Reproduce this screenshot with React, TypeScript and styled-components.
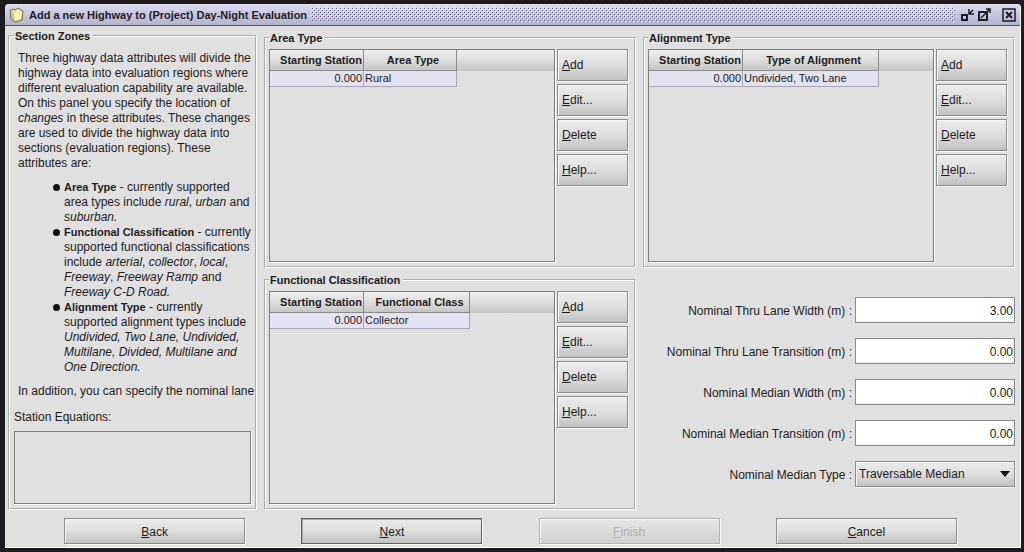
import React from "react";
import styled, { createGlobalStyle } from "styled-components";

const GlobalStyle = createGlobalStyle`
  *, *::before, *::after { box-sizing: border-box; }
  body {
    margin: 0;
    background: #1b1b20;
    color: #1c1c1c;
    font: 12px/15px "Liberation Sans", Arial, sans-serif;
  }
  b { font-size: 11px; }
  button, input, select, textarea { font: inherit; color: inherit; border-radius: 0; }
`;

const Desktop = styled.div`
  display: flex;
  min-height: 100vh;
  padding: 4px 3px 4px 5px;
`;

const Window = styled.main`
  flex: 1;
  display: flex;
  flex-direction: column;
  min-width: 0;
  background: #e0e0e0;
  border-radius: 4px 4px 0 0;
  border-right: 1px solid #fff;
  border-bottom: 1px solid #fff;
  overflow: hidden;
`;

const TitleBar = styled.header`
  display: flex;
  align-items: center;
  gap: 4px;
  height: 22px;
  padding: 0 4px;
  background: linear-gradient(#dedeee, #cacae6 40%, #b4b4cc);
  border-bottom: 1px solid #55555f;
`;

const Title = styled.h1`
  margin: 0;
  padding-top: 1px;
  font-size: 11px;
  line-height: 15px;
  white-space: nowrap;
`;

const Bumps = styled.svg`
  flex: 1;
  min-width: 0;
  height: 15px;
`;

const WindowButtons = styled.div`
  display: flex;
  align-items: center;
  gap: 4px;
  padding-left: 2px;
`;

const IconButton = styled.button<{ $apart?: boolean }>`
  display: flex;
  padding: 0;
  border: 0;
  background: none;
  margin-left: ${(p) => (p.$apart ? "7px" : "0")};
`;

const Panels = styled.div`
  flex: 1;
  display: grid;
  grid-template-columns: 249px minmax(0, 1fr) minmax(0, 1fr);
  gap: 7px;
  padding: 3px 5px 0 3px;
`;

const Column = styled.div`
  display: grid;
  grid-template-rows: 1fr 1fr;
  gap: 5px;
  padding-top: 2px;
`;

const Group = styled.fieldset<{ $column?: boolean }>`
  display: flex;
  flex-direction: ${(p) => (p.$column ? "column" : "row")};
  gap: ${(p) => (p.$column ? "0" : "2px")};
  min-width: 0;
  margin: 0;
  padding: ${(p) => (p.$column ? "8px 4px 4px" : "4px 6px 4px 3px")};
  border: 2px groove #fff;
`;

const Legend = styled.legend`
  padding: 0 3px 0 1px;
  font-size: 11px;
  font-weight: bold;
  line-height: 14px;
`;

const Notes = styled.div`
  flex: 1;
  padding: 0 4px;
  white-space: nowrap;
  p { margin: 0; }
  ul { margin: 9px 0; padding: 0; list-style: none; }
`;

const Note = styled.li`
  display: flex;
  gap: 4px;
  padding-left: 35px;
  &::before {
    content: "";
    flex: none;
    width: 7px;
    height: 7px;
    margin-top: 4px;
    border-radius: 50%;
    background: #111;
  }
`;

const Lines = styled.div`
  white-space: nowrap;
`;

const EquationsLabel = styled.label`
  margin-bottom: 6px;
`;

const Equations = styled.textarea`
  height: 73px;
  resize: none;
  background: #e0e0e0;
  border: 1px solid #7c7c7c;
  box-shadow: 1px 1px 0 #fff;
  outline: none;
`;

const TableBox = styled.div`
  flex: 1;
  min-width: 0;
  border: 1px solid #7c7c7c;
  box-shadow: 1px 1px 0 #fff;
  background: linear-gradient(#efefef, #dcdcdc 50%, #c4c4c4) 0 0 / 100% 21px no-repeat;
`;

const Table = styled.table<{ $second: number }>`
  width: ${(p) => 94 + p.$second}px;
  table-layout: fixed;
  border-collapse: separate;
  border-spacing: 0;
  th {
    height: 21px;
    padding: 0 0 0 6px;
    font-size: 11px;
    border-right: 1px solid #8a8a8a;
    border-bottom: 1px solid #8a8a8a;
    white-space: nowrap;
  }
  th:first-child { width: 94px; padding: 0 1px 0 0; text-align: right; }
  td {
    height: 16px;
    padding: 0 1px;
    font-size: 11px;
    line-height: 15px;
    background: #e2e2f0;
    border-right: 1px solid #a8a8b4;
    border-bottom: 1px solid #a8a8b4;
    white-space: nowrap;
  }
  td:first-child { text-align: right; }
`;

const Actions = styled.div`
  display: flex;
  flex-direction: column;
  gap: 3px;
  width: 71px;
`;

const Button = styled.button<{ $side?: boolean; $focus?: boolean }>`
  width: ${(p) => (p.$side ? "71px" : "181px")};
  height: ${(p) => (p.$side ? "32px" : "26px")};
  padding: ${(p) => (p.$side ? "0 4px" : "2px 4px 0")};
  text-align: ${(p) => (p.$side ? "left" : "center")};
  border: 1px solid ${(p) => (p.$focus ? "#606060" : "#8c8c8c")};
  background: linear-gradient(#ececec, #dedede 50%, #c2c2c2);
  box-shadow: 1px 1px 0 #f8f8f8, inset 1px 1px 0 ${(p) => (p.$focus ? "#aaa" : "#f6f6f6")};
  &:disabled { color: #b0b0b0; border-color: #b4b4b4; background: linear-gradient(#e6e6e6, #d0d0d0); }
`;

const Form = styled.form`
  display: grid;
  grid-template-columns: 1fr 160px;
  grid-auto-rows: 26px;
  align-content: start;
  align-items: center;
  gap: 15px 3px;
  padding-top: 24px;
`;

const FieldLabel = styled.label`
  padding-top: 2px;
  text-align: right;
`;

const Field = styled.input`
  width: 100%;
  height: 26px;
  padding: 2px 1px 0;
  text-align: right;
  background: #fff;
  border: 1px solid #8a8a8a;
  box-shadow: inset -1px -1px 0 #eee;
`;

const SelectWrap = styled.div`
  position: relative;
  svg { position: absolute; right: 5px; top: 10px; pointer-events: none; }
`;

const Select = styled.select`
  display: block;
  width: 100%;
  height: 26px;
  padding: 0 3px;
  appearance: none;
  border: 1px solid #8a8a8a;
  background: linear-gradient(#ececec, #dedede 50%, #c2c2c2);
  box-shadow: 1px 1px 0 #f8f8f8, inset 1px 1px 0 #f6f6f6;
`;

const Footer = styled.footer`
  display: grid;
  grid-template-columns: repeat(4, 1fr);
  justify-items: center;
  padding: 8px 35px 3px 31px;
`;

function Mnemonic({ text }: { text: string }) {
  return (
    <>
      <u>{text[0]}</u>
      {text.slice(1)}
    </>
  );
}

function ZoneGroup({ name, heading, value, second }: { name: string; heading: string; value: string; second: number }) {
  return (
    <Group>
      <Legend>{name}</Legend>
      <TableBox>
        <Table $second={second}>
          <thead>
            <tr>
              <th>Starting Station</th>
              <th>{heading}</th>
            </tr>
          </thead>
          <tbody>
            <tr>
              <td>0.000</td>
              <td>{value}</td>
            </tr>
          </tbody>
        </Table>
      </TableBox>
      <Actions>
        {["Add", "Edit...", "Delete", "Help..."].map((t) => (
          <Button key={t} type="button" $side>
            <Mnemonic text={t} />
          </Button>
        ))}
      </Actions>
    </Group>
  );
}

const FIELDS = [
  ["Nominal Thru Lane Width (m) :", "3.00"],
  ["Nominal Thru Lane Transition (m) :", "0.00"],
  ["Nominal Median Width (m) :", "0.00"],
  ["Nominal Median Transition (m) :", "0.00"],
];

export default function App() {
  return (
    <Desktop>
      <GlobalStyle />
      <Window>
        <TitleBar>
          <svg width="16" height="16" viewBox="0 0 16 16">
            <path d="M1 3 L5 2 L6 3 L9 1 L14 4 L13 13 L6 15 L2 12 Z" fill="#e9d58a" stroke="#77704f" />
            <path d="M2 4 L5 7 L6 14 L3 11 Z" fill="#c9c4b0" />
            <path d="M5 6 L9 3 L13 5 L12 12 L6 14 Z" fill="#fff0b4" />
          </svg>
          <Title>Add a new Highway to (Project) Day-Night Evaluation</Title>
          <Bumps aria-hidden="true">
            <defs>
              <pattern id="bumps" width="4" height="4" patternUnits="userSpaceOnUse">
                <path d="M0 0h1v1h-1zM2 2h1v1h-1z" fill="#f4f4ff" />
                <path d="M1 1h1v1h-1zM3 3h1v1h-1z" fill="#66667e" />
              </pattern>
            </defs>
            <rect width="100%" height="100%" fill="url(#bumps)" />
          </Bumps>
          <WindowButtons>
            <IconButton aria-label="Minimize">
              <svg width="13" height="14" viewBox="0 0 13 14" fill="none" stroke="#1c1c24" strokeWidth="2">
                <path d="M1 7h5v5h-5z" />
                <path d="M8 1v5h5M8 6l4-4" strokeWidth="1.5" />
              </svg>
            </IconButton>
            <IconButton aria-label="Maximize">
              <svg width="13" height="14" viewBox="0 0 13 14" fill="none" stroke="#1c1c24" strokeWidth="2">
                <path d="M1 4h8v8H1z" />
                <path d="M3 10l9-9M8 1h4v4" strokeWidth="1.5" />
              </svg>
            </IconButton>
            <IconButton aria-label="Close" $apart>
              <svg width="14" height="14" viewBox="0 0 14 14" fill="none" stroke="#1c1c24" strokeWidth="2">
                <path d="M1 1h12v12H1z" strokeWidth="1.5" />
                <path d="M4 4l6 6M10 4l-6 6" />
              </svg>
            </IconButton>
          </WindowButtons>
        </TitleBar>

        <Panels>
          <Group $column>
            <Legend>Section Zones</Legend>
            <Notes>
              <p>
                Three highway data attributes will divide the<br />
                highway data into evaluation regions where<br />
                different evaluation capability are available.<br />
                On this panel you specify the location of<br />
                <i>changes</i> in these attributes. These changes<br />
                are used to divide the highway data into<br />
                sections (evaluation regions). These<br />
                attributes are:
              </p>
              <ul>
                <Note>
                  <Lines>
                    <b>Area Type</b> - currently supported<br />
                    area types include <i>rural</i>, <i>urban</i> and<br />
                    <i>suburban.</i>
                  </Lines>
                </Note>
                <Note>
                  <Lines>
                    <b>Functional Classification</b> - currently<br />
                    supported functional classifications<br />
                    include <i>arterial</i>, <i>collector</i>, <i>local</i>,<br />
                    <i>Freeway</i>, <i>Freeway Ramp</i> and<br />
                    <i>Freeway C-D Road.</i>
                  </Lines>
                </Note>
                <Note>
                  <Lines>
                    <b>Alignment Type</b> - currently<br />
                    supported alignment types include<br />
                    <i>Undivided, Two Lane, Undivided,</i><br />
                    <i>Multilane, Divided, Multilane and</i><br />
                    <i>One Direction.</i>
                  </Lines>
                </Note>
              </ul>
              <p>In addition, you can specify the nominal lane</p>
            </Notes>
            <EquationsLabel htmlFor="equations">Station Equations:</EquationsLabel>
            <Equations id="equations" readOnly />
          </Group>

          <Column>
            <ZoneGroup name="Area Type" heading="Area Type" value="Rural" second={93} />
            <ZoneGroup name="Functional Classification" heading="Functional Class" value="Collector" second={106} />
          </Column>

          <Column>
            <ZoneGroup name="Alignment Type" heading="Type of Alignment" value="Undivided, Two Lane" second={136} />
            <Form>
              {FIELDS.map(([label, value], i) => (
                <React.Fragment key={label}>
                  <FieldLabel htmlFor={`field-${i}`}>{label}</FieldLabel>
                  <Field id={`field-${i}`} defaultValue={value} />
                </React.Fragment>
              ))}
              <FieldLabel htmlFor="median-type">Nominal Median Type :</FieldLabel>
              <SelectWrap>
                <Select id="median-type">
                  <option>Traversable Median</option>
                </Select>
                <svg width="10" height="6" viewBox="0 0 10 6">
                  <path d="M0 0h10L5 6z" fill="#111" />
                </svg>
              </SelectWrap>
            </Form>
          </Column>
        </Panels>

        <Footer>
          <Button type="button"><Mnemonic text="Back" /></Button>
          <Button type="button" $focus><Mnemonic text="Next" /></Button>
          <Button type="button" disabled><Mnemonic text="Finish" /></Button>
          <Button type="button"><Mnemonic text="Cancel" /></Button>
        </Footer>
      </Window>
    </Desktop>
  );
}
